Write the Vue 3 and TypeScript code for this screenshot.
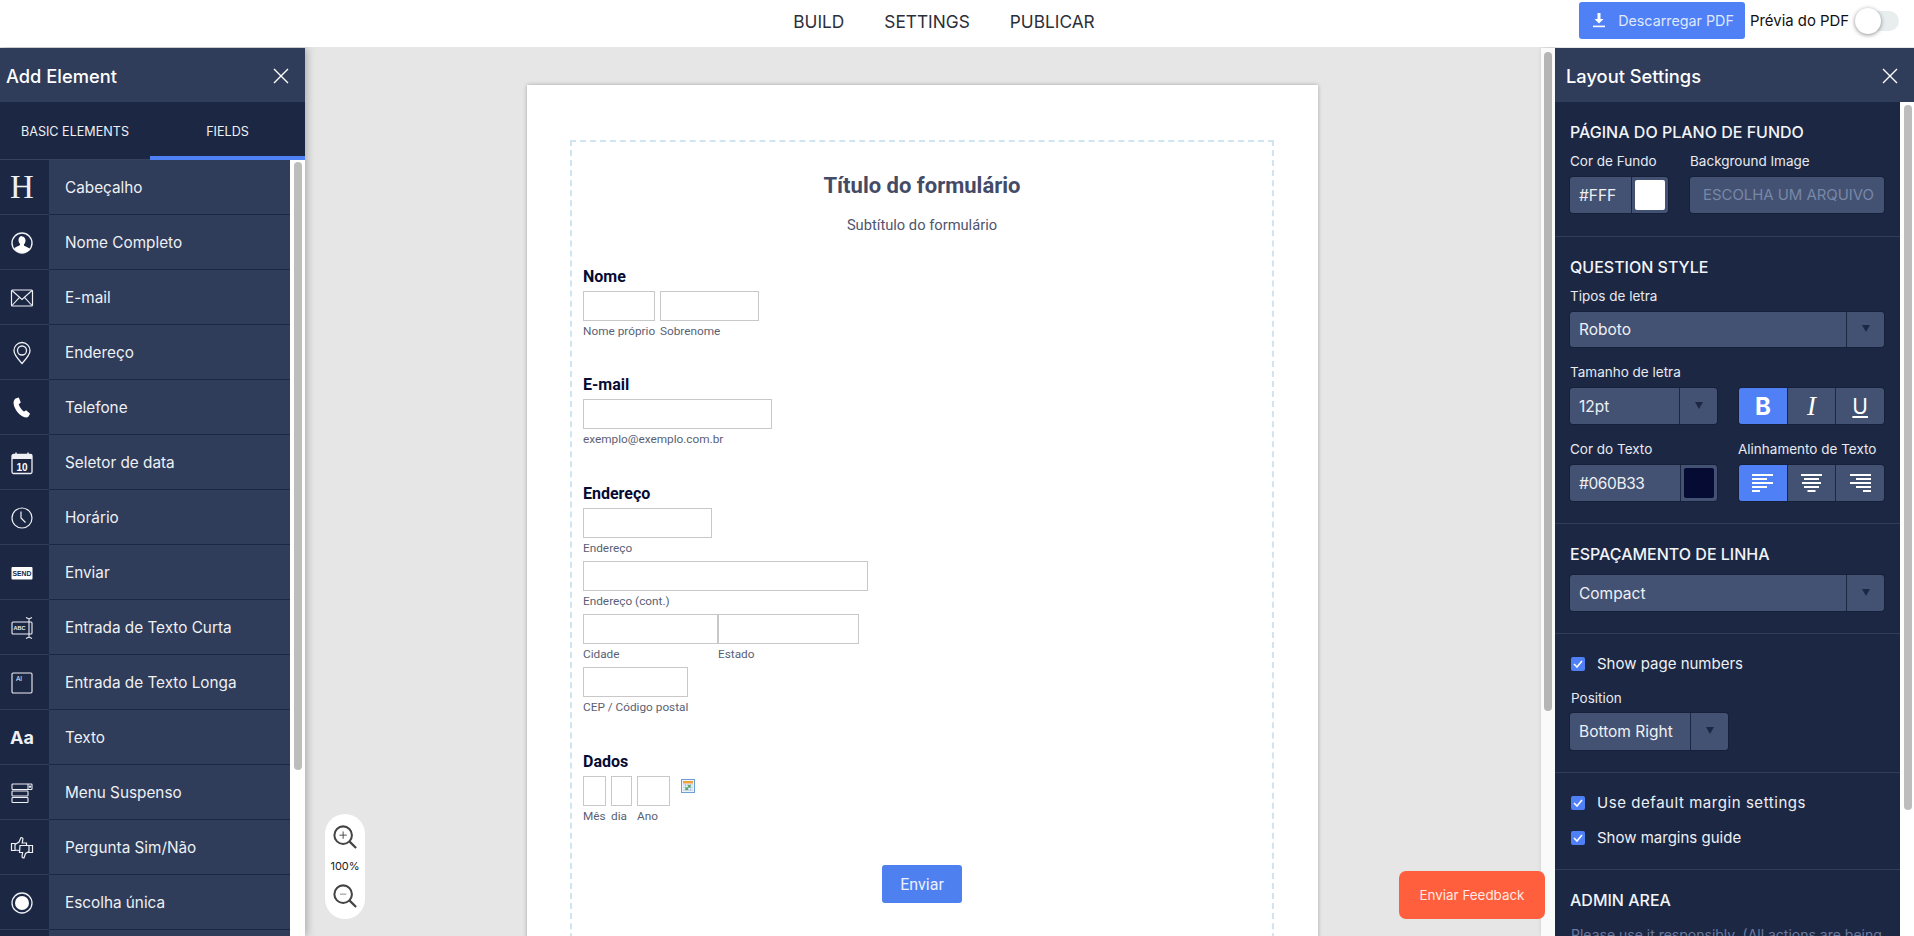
<template>
  <div class="app">
    <header class="topbar">
      <nav class="nav">
        <a>BUILD</a>
        <a>SETTINGS</a>
        <a>PUBLICAR</a>
      </nav>
      <div class="top-actions">
        <button class="pdf-btn">
          <svg width="14" height="15" viewBox="0 0 14 15" fill="#fff">
            <path d="M5.5 0h3v6h3L7 10.6 2.5 6h3z" />
            <rect x="1" y="12.6" width="12" height="1.6" />
          </svg>
          Descarregar PDF
        </button>
        <span class="preview">Prévia do PDF</span>
        <span class="toggle"><i></i></span>
      </div>
    </header>

    <main class="main">
      <aside class="left">
        <div class="panel-head">
          <span>Add Element</span>
          <svg class="close" width="16" height="16" viewBox="0 0 16 16" stroke="#fff" stroke-width="1.4"><path d="M1 1l14 14M15 1L1 15" /></svg>
        </div>
        <div class="tabs">
          <div class="tab">BASIC ELEMENTS</div>
          <div class="tab active">FIELDS</div>
        </div>
        <div class="list-wrap">
          <ul class="list">
            <li v-for="item in elements" :key="item.id" class="row">
              <span class="row-icon">
                <span v-if="item.id === 'h'" class="glyph-h">H</span>
                <span v-else-if="item.id === 'aa'" class="glyph-aa">Aa</span>
                <svg v-else-if="item.id !== 'none'" width="24" height="24" viewBox="0 0 24 24" fill="none" stroke="#eef0f4" stroke-width="1.1">
                  <template v-if="item.id === 'user'">
                    <circle cx="12" cy="12" r="10" stroke-width="1.4" />
                    <path fill="#fff" stroke="none" d="M12 5.4c2.2 0 3.5 1.8 3.5 4 0 1.7-.7 3.100-1.500 3.800v1.300c.3.700 4.200 1.600 5.800 3.400A10 10 0 0 1 12 22a10 10 0 0 1-7.800-4.500c1.600-1.800 5.500-2.700 5.800-3.400v-1.300c-.8-.7-1.500-2.100-1.500-3.800 0-2.200 1.300-4 3.500-4z" />
                  </template>
                  <template v-else-if="item.id === 'mail'">
                    <rect x="1.500" y="4" width="21" height="16" rx="1" stroke-width="1.200" />
                    <path d="M2 4.500l10 9 10-9M2 19.500l7.500-8.200M22 19.500l-7.500-8.200" />
                  </template>
                  <template v-else-if="item.id === 'pin'">
                    <path stroke-width="1.300" d="M12 22.500C8 18 4 14 4 9.500a8 8 0 0 1 16 0c0 4.500-4 8.500-8 13z" />
                    <circle cx="12" cy="9.500" r="4.500" stroke-width="1.300" />
                  </template>
                  <template v-else-if="item.id === 'phone'">
                    <path fill="#fff" stroke="none" d="M5.500 2.500l3.300-.9 2 5-2 1.700c.5 2.400 3 6 5.300 7.200l2-1.300 4 3.600-1.800 3c-1 .8-3 .9-5 0C8.500 18.500 4 12.500 3.600 7.500c-.2-2 .5-4 1.900-5z" />
                  </template>
                  <template v-else-if="item.id === 'cal'">
                    <rect x="2" y="3.500" width="20" height="19" rx="1.500" stroke-width="1.300" />
                    <path fill="#eef0f4" stroke="none" d="M2 5a1.500 1.500 0 0 1 1.500-1.500h17A1.500 1.500 0 0 1 22 5v3H2z" />
                    <path stroke-width="1.500" stroke="#eef0f4" d="M6 1.500v3.500M18 1.500v3.500" />
                    <text x="12" y="19.500" text-anchor="middle" class="svg-text" font-size="10" font-weight="700" fill="#fff" stroke="none">10</text>
                  </template>
                  <template v-else-if="item.id === 'clock'">
                    <circle cx="12" cy="12" r="10" stroke-width="1.200" />
                    <path stroke-width="1.200" d="M11 5.500V12l4.500 4.500" />
                  </template>
                  <template v-else-if="item.id === 'send'">
                    <rect x="1.500" y="6" width="21" height="12.500" rx="1" fill="#fff" stroke="none" />
                    <text x="12" y="15" text-anchor="middle" class="svg-text" font-size="6.800" font-weight="700" fill="#1c2744" stroke="none">SEND</text>
                  </template>
                  <template v-else-if="item.id === 'short'">
                    <rect x="2" y="6" width="20" height="12" rx="1" />
                    <text x="9.500" y="14" text-anchor="middle" class="svg-text" font-size="5.500" font-weight="700" fill="#eef0f4" stroke="none">ABC</text>
                    <path d="M19 2.500v19M16 1.500l3 1.500 3-1.500M16 22.500l3-1.500 3 1.500" />
                  </template>
                  <template v-else-if="item.id === 'long'">
                    <rect x="2" y="2" width="20" height="20" rx="1.200" />
                    <text x="6" y="9.500" class="svg-text" font-size="6.500" fill="#eef0f4" stroke="none">AI</text>
                  </template>
                  <template v-else-if="item.id === 'drop'">
                    <rect x="2" y="3" width="20" height="5.500" rx=".8" />
                    <rect x="2" y="10" width="16" height="5" rx=".8" />
                    <rect x="2" y="16.500" width="16" height="5" rx=".8" />
                    <path d="M18 3v5.500" /><circle cx="20" cy="5.700" r=".6" fill="#fff" />
                  </template>
                  <template v-else-if="item.id === 'thumb'">
                    <path stroke-width="1.200" d="M1.500 7.500h3.500v7H1.500zM5 8.500l4-2.500 2-4.500c1.500 0 2.200 1 1.800 2.500l-.6 3h4.300v2M5 14l4.500.5" />
                    <path stroke-width="1.200" d="M22.500 9.500H19v7h3.500zM19 15.500l-3.500 2-1.500 4.500c-1.500 0-2.200-1-1.900-2.500l.5-3H9.500l.5-7H19" />
                  </template>
                  <template v-else-if="item.id === 'radio'">
                    <circle cx="12" cy="12" r="10" stroke-width="1.300" />
                    <circle cx="12" cy="12" r="7" fill="#fff" stroke="none" />
                  </template>
                </svg>
              </span>
              <span class="row-label">{{ item.label }}</span>
            </li>
          </ul>
          <div class="side-track"><div class="side-thumb"></div></div>
        </div>
      </aside>

      <section class="stage">
        <div class="viewport">
          <div class="paper">
            <div class="margins">
              <h1 class="form-title">Título do formulário</h1>
              <p class="form-sub">Subtítulo do formulário</p>

              <div class="field first">
                <div class="field-label">Nome</div>
                <div class="inputs">
                  <label v-for="p in nameParts" :key="p.label" class="part" :style="{ width: p.w + 'px' }">
                    <span class="box"></span><small>{{ p.label }}</small>
                  </label>
                </div>
              </div>

              <div class="field mail">
                <div class="field-label">E-mail</div>
                <div class="inputs">
                  <label class="part w-email"><span class="box"></span><small>exemplo@exemplo.com.br</small></label>
                </div>
              </div>

              <div class="field">
                <div class="field-label">Endereço</div>
                <div class="stack">
                  <label class="part w-addr"><span class="box"></span><small>Endereço</small></label>
                  <label class="part w-addr2"><span class="box"></span><small>Endereço (cont.)</small></label>
                  <div class="inputs tight">
                    <label class="part w-city"><span class="box"></span><small>Cidade</small></label>
                    <label class="part w-state"><span class="box"></span><small>Estado</small></label>
                  </div>
                  <label class="part w-zip"><span class="box"></span><small>CEP / Código postal</small></label>
                </div>
              </div>

              <div class="field">
                <div class="field-label">Dados</div>
                <div class="inputs date">
                  <label v-for="p in dateParts" :key="p.label" class="part" :style="{ width: p.w + 'px' }">
                    <span class="box"></span><small>{{ p.label }}</small>
                  </label>
                  <svg class="date-icon" width="14" height="14" viewBox="0 0 14 14">
                    <rect x=".5" y=".5" width="13" height="13" fill="#eaf2fb" stroke="#6d9fd6" />
                    <rect x="2" y="2" width="10" height="2.500" fill="#f0a03c" />
                    <path d="M2 6h10M2 8.500h10M2 11h10M4.500 5v7M7 5v7M9.500 5v7" stroke="#9db6cf" stroke-width=".6" />
                    <rect x="7" y="6" width="2.500" height="2.500" fill="#58a958" />
                    <rect x="4.500" y="8.500" width="2.500" height="2.500" fill="#58a958" />
                  </svg>
                </div>
              </div>

              <div class="submit-row"><button class="submit">Enviar</button></div>
            </div>
          </div>

          <div class="zoom-ctl">
            <svg width="24" height="24" viewBox="0 0 26 26" fill="none" stroke="#444" stroke-width="2.200">
              <circle cx="11" cy="11" r="9.500" /><path d="M18 18l7 7" stroke-width="2.400" />
              <path d="M11 7v8M7 11h8" stroke-width="1" />
            </svg>
            <span>100%</span>
            <svg width="24" height="24" viewBox="0 0 26 26" fill="none" stroke="#444" stroke-width="2.200">
              <circle cx="11" cy="11" r="9.500" /><path d="M18 18l7 7" stroke-width="2.400" />
              <path d="M7.500 11h7" stroke="#999" stroke-width="1.200" />
            </svg>
          </div>
        </div>
        <div class="stage-track"><div class="stage-thumb"></div></div>
        <button class="feedback">Enviar Feedback</button>
      </section>

      <aside class="right">
        <div class="panel-head">
          <span>Layout Settings</span>
          <svg class="close" width="16" height="16" viewBox="0 0 16 16" stroke="#fff" stroke-width="1.4"><path d="M1 1l14 14M15 1L1 15" /></svg>
        </div>
        <div class="right-body">
          <div class="settings">
            <section class="sec sec-bg">
              <h3>PÁGINA DO PLANO DE FUNDO</h3>
              <div class="bg-row">
                <div class="bg-color">
                  <label class="lbl">Cor de Fundo</label>
                  <div class="ctl color-ctl"><span class="val">#FFF</span><span class="swatch-cell"><i class="swatch white"></i></span></div>
                </div>
                <div>
                  <label class="lbl">Background Image</label>
                  <div class="ctl file-ctl">ESCOLHA UM ARQUIVO</div>
                </div>
              </div>
            </section>

            <section class="sec sec-question">
              <h3>QUESTION STYLE</h3>
              <label class="lbl">Tipos de letra</label>
              <div class="ctl select"><span class="val">Roboto</span><span class="arrow"><i></i></span></div>
              <div class="two style-row">
                <div class="half">
                  <label class="lbl">Tamanho de letra</label>
                  <div class="ctl select tall"><span class="val">12pt</span><span class="arrow"><i></i></span></div>
                </div>
                <div class="half narrow">
                  <label class="lbl">&nbsp;</label>
                  <div class="ctl btn-group">
                    <span class="seg on"><b class="g-b">B</b></span>
                    <span class="seg"><em class="g-i">I</em></span>
                    <span class="seg"><u class="g-u">U</u></span>
                  </div>
                </div>
              </div>
              <div class="two style-row">
                <div class="half">
                  <label class="lbl">Cor do Texto</label>
                  <div class="ctl color-ctl"><span class="val hex">#060B33</span><span class="swatch-cell"><i class="swatch navy"></i></span></div>
                </div>
                <div class="half narrow">
                  <label class="lbl align-lbl">Alinhamento de Texto</label>
                  <div class="ctl btn-group">
                    <span v-for="(a, i) in aligns" :key="a.name" class="seg" :class="{ on: i === 0 }">
                      <svg width="21" height="19" viewBox="0 0 21 19" fill="#fff">
                        <rect v-for="(w, j) in a.bars" :key="j" :x="a.x(w)" :y="j * 4" :width="w" height="2" />
                      </svg>
                    </span>
                  </div>
                </div>
              </div>
            </section>

            <section class="sec sec-spacing">
              <h3>ESPAÇAMENTO DE LINHA</h3>
              <div class="ctl select tall"><span class="val">Compact</span><span class="arrow"><i></i></span></div>
            </section>

            <section class="sec sec-pages">
              <div class="check"><i class="tick"><svg width="10" height="8" viewBox="0 0 10 8" fill="none" stroke="#fff" stroke-width="1.600"><path d="M1 4l3 3 5-6" /></svg></i>Show page numbers</div>
              <label class="lbl pos-lbl">Position</label>
              <div class="ctl select pos"><span class="val">Bottom Right</span><span class="arrow"><i></i></span></div>
            </section>

            <section class="sec sec-margins">
              <div class="check"><i class="tick"><svg width="10" height="8" viewBox="0 0 10 8" fill="none" stroke="#fff" stroke-width="1.600"><path d="M1 4l3 3 5-6" /></svg></i><span class="wide">Use default margin settings</span></div>
              <div class="check"><i class="tick"><svg width="10" height="8" viewBox="0 0 10 8" fill="none" stroke="#fff" stroke-width="1.600"><path d="M1 4l3 3 5-6" /></svg></i>Show margins guide</div>
            </section>

            <section class="sec sec-admin">
              <h3>ADMIN AREA</h3>
              <p class="note">Please use it responsibly. (All actions are being</p>
            </section>
          </div>
          <div class="side-track right-track"><div class="side-thumb"></div></div>
        </div>
      </aside>
    </main>
  </div>
</template>

<script setup lang="ts">
const elements = [
  { id: 'h', label: 'Cabeçalho' },
  { id: 'user', label: 'Nome Completo' },
  { id: 'mail', label: 'E-mail' },
  { id: 'pin', label: 'Endereço' },
  { id: 'phone', label: 'Telefone' },
  { id: 'cal', label: 'Seletor de data' },
  { id: 'clock', label: 'Horário' },
  { id: 'send', label: 'Enviar' },
  { id: 'short', label: 'Entrada de Texto Curta' },
  { id: 'long', label: 'Entrada de Texto Longa' },
  { id: 'aa', label: 'Texto' },
  { id: 'drop', label: 'Menu Suspenso' },
  { id: 'thumb', label: 'Pergunta Sim/Não' },
  { id: 'radio', label: 'Escolha única' },
  { id: 'none', label: '' },
];

const nameParts = [
  { label: 'Nome próprio', w: 72 },
  { label: 'Sobrenome', w: 99 },
];

const dateParts = [
  { label: 'Mês', w: 23 },
  { label: 'dia', w: 21 },
  { label: 'Ano', w: 33 },
];

const aligns = [
  { name: 'left', bars: [21, 15, 21, 15, 8], x: () => 0 },
  { name: 'center', bars: [21, 15, 19, 15, 8], x: (w: number) => (21 - w) / 2 },
  { name: 'right', bars: [21, 15, 21, 15, 8], x: (w: number) => 21 - w },
];
</script>

<style>
html, body { margin: 0; height: 100%; overflow: hidden; }
</style>

<style scoped>
.app {
  width: 1914px;
  height: 936px;
  display: flex;
  flex-direction: column;
  overflow: hidden;
  font-family: Inter, "Noto Sans", sans-serif;
  background: #e6e6e6;
}

.topbar {
  height: 47px;
  box-sizing: border-box;
  padding-bottom: 5px;
  flex: none;
  background: #fff;
  display: flex;
  align-items: center;
  justify-content: center;
  position: relative;
  z-index: 3;
}
.nav { display: flex; gap: 40px; margin-right: 26px; font-size: 17.300px; color: #2b2f38; }
.top-actions {
  position: absolute;
  left: 1579px;
  top: 2px;
  display: flex;
  align-items: center;
  height: 37px;
}
.pdf-btn {
  width: 166px;
  height: 37px;
  border: 0;
  border-radius: 3px;
  background: #4f80f6;
  color: #dfe8fd;
  font: 14.300px Inter, sans-serif;
  display: flex;
  align-items: center;
  justify-content: center;
  gap: 12px;
  padding: 0 0 0 2px;
}
.preview { margin-left: 5px; font-size: 14.900px; color: #111; width: 105px; white-space: nowrap; }
.toggle { position: relative; width: 44px; height: 20px; border-radius: 10px; background: #e8eeee; }
.toggle i {
  position: absolute; left: 0; top: -3px; width: 26px; height: 26px; border-radius: 50%;
  background: #fff; box-shadow: 0 1px 4px rgba(0, 0, 0, .45);
}

.main { flex: 1; min-height: 0; display: flex; margin-top: 1px; }

.left { width: 305px; flex: none; display: flex; flex-direction: column; background: #fff; box-shadow: 2px 0 8px rgba(0, 0, 0, .25); z-index: 2; }
.panel-head {
  height: 54px;
  box-sizing: border-box;
  flex: none;
  background: #2f3c5a;
  color: #fff;
  font-size: 18.300px;
  font-weight: 500;
  display: flex;
  align-items: center;
  justify-content: space-between;
  padding: 2px 16px 0 6px;
}
.right .panel-head { padding: 2px 16px 0 11px; }
.tabs { height: 58px; flex: none; display: flex; background: #1c2744; color: #eef0f4; font-size: 12.600px; }
.tab { width: 150px; flex: none; display: flex; align-items: center; justify-content: center; box-shadow: inset 0 -1px 0 #34415f; }
.tab.active { width: 155px; box-shadow: inset 0 -4px 0 #4f80f6; }
.list-wrap { flex: 1; min-height: 0; display: flex; overflow: hidden; }
.list { width: 290px; flex: none; margin: 0; padding: 0; list-style: none; }
.row { height: 55px; display: flex; background: #2f3c5a; color: #eef0f4; box-shadow: inset 0 -1px 0 #1c2744; }
.row-icon { width: 49px; box-sizing: border-box; padding-right: 5px; flex: none; background: #1c2744; display: flex; align-items: center; justify-content: center; box-shadow: inset 0 -1px 0 #2f3c5a; }
.row-label { padding-left: 16px; font-size: 15.300px; line-height: 56px; white-space: nowrap; }
.glyph-h { font: 33px "Liberation Serif", serif; color: #eef0f4; }
.glyph-aa { font: 700 18px Inter, sans-serif; color: #eef0f4; }
.svg-text { font-family: "Liberation Sans", sans-serif; }
.side-track { flex: 1; background: #fff; position: relative; padding: 2px 0 0 4px; }
.side-thumb { width: 8px; height: 608px; background: #bdbdbd; border-radius: 4px; }

.stage { flex: 1; min-width: 0; display: flex; position: relative; }
.viewport { flex: 1; min-width: 0; position: relative; overflow: hidden; }
.stage-track { width: 14px; flex: none; background: #fafafa; padding: 4px 0 0 3px; box-sizing: border-box; z-index: 1; box-shadow: 2px 0 6px rgba(0, 0, 0, .18); }
.stage-thumb { width: 8px; height: 659px; background: #b5b5b5; border-radius: 4px; }

.paper {
  width: 791px;
  height: 1100px;
  box-sizing: border-box;
  margin: 37px 0 0 222px;
  padding: 55px 44px 0 43px;
  background: #fff;
  box-shadow: 0 0 4px rgba(0, 0, 0, .28);
  font-family: Roboto, sans-serif;
}
.margins { border: 2px dashed #cfe5f2; height: 1000px; box-sizing: border-box; padding: 0 11px; }
.form-title { margin: 29px 0 0; text-align: center; font-size: 22px; line-height: 30px; font-weight: 700; color: #444b66; }
.form-sub { margin: 14px 0 0; text-align: center; font-size: 14.700px; line-height: 20px; color: #4f556e; }
.field { margin-top: 36px; }
.field.mail { margin-top: 35px; }
.field.first { margin-top: 32px; }
.field-label { font-size: 16px; line-height: 20px; font-weight: 700; color: #060b33; margin-bottom: 4px; }
.inputs { display: flex; gap: 5px; }
.inputs.tight { gap: 0; }
.stack { display: flex; flex-direction: column; gap: 4px; }
.part { display: block; flex: none; }
.w-email { width: 189px; }
.w-addr { width: 129px; }
.w-addr2 { width: 285px; }
.w-city { width: 135px; }
.w-state { width: 141px; }
.w-zip { width: 105px; }
.box { display: block; height: 30px; box-sizing: border-box; border: 1px solid #c8c8c8; background: #fff; }
small { display: block; margin-top: 1px; font-size: 11.800px; line-height: 18px; color: #5a5f75; white-space: nowrap; }
.date { height: 50px; }
.date-icon { margin: 3px 0 0 6px; }
.submit-row { display: flex; justify-content: center; margin-top: 39px; }
.submit { width: 80px; height: 38px; border: 0; border-radius: 3px; background: #4f80f0; color: #eaf0fe; font: 16px Roboto, sans-serif; }

.zoom-ctl {
  position: absolute;
  left: 20px;
  top: 766px;
  width: 40px;
  height: 105px;
  border-radius: 20px;
  background: #fff;
  display: flex;
  flex-direction: column;
  align-items: center;
  justify-content: center;
  font-size: 11px;
  line-height: 11px;
  color: #222;
  gap: 12px;
}
.feedback {
  position: absolute;
  left: 1094px;
  top: 823px;
  width: 146px;
  height: 48px;
  border: 0;
  border-radius: 7px;
  background: #ff5f3c;
  color: #ffe9e3;
  font: 13.400px Inter, sans-serif;
  z-index: 3;
}

.right { width: 359px; flex: none; display: flex; flex-direction: column; background: #fff; z-index: 2; }
.right-body { flex: 1; min-height: 0; display: flex; overflow: hidden; }
.settings { width: 345px; flex: none; background: #1c2744; color: #e8eaf0; }
.right-track { padding: 3px 0 0 4px; }
.right-track .side-thumb { height: 705px; }
.sec { padding: 0 16px 0 15px; border-bottom: 1px solid #2f3c5a; box-sizing: border-box; }
h3 { margin: 0; font-size: 16px; font-weight: 500; line-height: 20px; color: #f2f4f8; }
.lbl { display: block; font-size: 13.500px; line-height: 18px; color: #e8eaf0; white-space: nowrap; }
.align-lbl { margin-left: -1px; }
.ctl {
  background: #435273;
  border-radius: 3px;
  box-shadow: 0 0 0 1px #17203a;
  display: flex;
  height: 36px;
  align-items: stretch;
  font-size: 15.500px;
  color: #eef0f4;
}
.val { flex: 1; display: flex; align-items: center; padding-left: 9px; white-space: nowrap; }
.val.hex { letter-spacing: -.4px; }
.arrow { width: 37px; flex: none; border-left: 1px solid #1c2744; display: flex; align-items: center; justify-content: center; }
.arrow i { width: 0; height: 0; border-left: 4.500px solid transparent; border-right: 4.500px solid transparent; border-top: 7px solid #1c2744; margin-top: -2px; }
.two { display: flex; justify-content: space-between; }
.sec-bg { height: 135px; padding-top: 20px; }
.bg-row { display: flex; margin-top: 10px; }
.bg-color { width: 120px; flex: none; }
.bg-row .lbl { margin-bottom: 7px; }
.color-ctl { width: 98px; }
.swatch-cell { width: 36px; flex: none; border-left: 1px solid #1c2744; display: flex; align-items: center; justify-content: center; }
.swatch { width: 30px; height: 30px; border-radius: 2px; display: block; }
.swatch.white { background: #fff; }
.swatch.navy { background: #060b33; }
.file-ctl { width: 194px; padding-left: 13px; box-sizing: border-box; align-items: center; color: #7987a6; font-size: 14.900px; white-space: nowrap; }
.sec-question { height: 287px; padding-top: 20px; }
.sec-question .lbl { margin-top: 10px; margin-bottom: 7px; }
.sec-question .select { height: 35px; }
.sec-question .select.tall { height: 36px; }
.style-row { margin-top: 16px; }
.style-row .lbl { margin-top: 0; margin-bottom: 7px; }
.half { width: 147px; }
.half.narrow { width: 145px; }
.half .color-ctl { width: 147px; }
.btn-group { display: flex; }
.seg { flex: 1; display: flex; align-items: center; justify-content: center; border-left: 1px solid #1c2744; }
.seg:first-child { border-left: 0; border-radius: 3px 0 0 3px; }
.seg.on { background: #4f80f6; }
.g-b { font: 700 24px Inter, sans-serif; color: #fff; }
.g-i { font: italic 27px "Liberation Serif", serif; color: #fff; }
.g-u { font: 21px Inter, sans-serif; color: #fff; }
.sec-spacing { height: 110px; padding-top: 20px; }
.sec-spacing .ctl { margin-top: 11px; }
.check { display: flex; align-items: center; font-size: 15px; line-height: 20px; color: #eef0f4; }
.tick { width: 14px; height: 14px; border-radius: 2px; background: #4f80f6; margin: 0 12px 0 1px; display: flex; align-items: center; justify-content: center; flex: none; }
.wide { letter-spacing: .55px; }
.sec-pages { height: 139px; padding-top: 20px; }
.pos-lbl { margin: 15px 0 6px 1px; }
.select.pos { width: 158px; height: 37px; }
.sec-margins { height: 97px; padding-top: 20px; display: flex; flex-direction: column; gap: 15px; }
.sec-admin { padding-top: 20px; border: 0; }
.note { margin: 16px 0 0 1px; font-size: 14px; line-height: 18px; color: #6b7a9e; white-space: nowrap; }
</style>
